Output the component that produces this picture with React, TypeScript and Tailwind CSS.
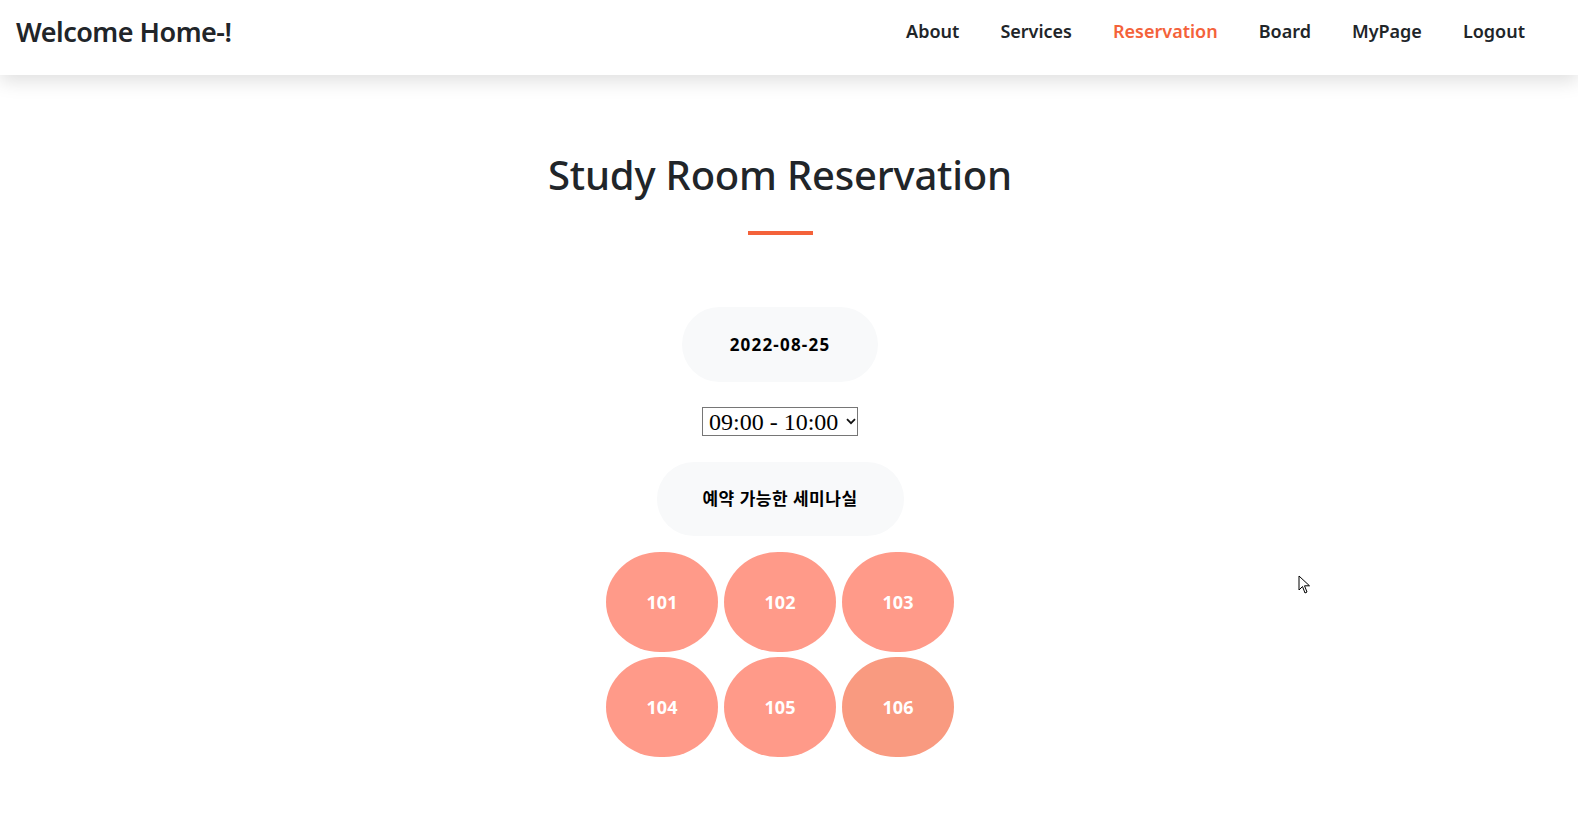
export default function App() {
  const rooms = ["101", "102", "103", "104", "105", "106"];
  const nav = ["About", "Services", "Reservation", "Board", "MyPage", "Logout"];

  return (
    <div className="relative min-h-screen bg-white text-[#212529]" style={{ fontFamily: '"Noto Sans", "Noto Sans CJK KR", sans-serif' }}>
      <header className="relative z-10 flex h-[75px] items-start justify-between bg-white pl-4 pr-[53px] shadow-[0_6px_18px_rgba(0,0,0,0.13)]">
        <h1 className="pt-[12px] text-[27px] font-semibold tracking-[-0.5px] text-[#212529]">Welcome Home-!</h1>
        <nav className="flex gap-[41px] pt-[18px] text-[18px] font-semibold">
          {nav.map((n) => (
            <a key={n} className={n === "Reservation" ? "text-[#f4623a]" : "text-[#212529]"}>
              {n}
            </a>
          ))}
        </nav>
      </header>

      <main className="flex flex-col items-center pr-[18px] pt-[75px]">
        <h2 className="text-[40px] font-medium leading-tight tracking-[-0.2px]">Study Room Reservation</h2>
        <div className="mt-[31px] h-[4px] w-[65px] bg-[#f4623a]" />

        <div className="mt-[72px] flex h-[75px] w-[196px] items-center justify-center rounded-full bg-[#f8f9fa] text-[17px] font-bold tracking-[1.2px] text-black">
          2022-08-25
        </div>

        <div className="relative mt-[25px]">
          <select
            className="block h-[29px] w-[156px] appearance-none border border-[#767676] bg-white pl-[6px] text-[24px] leading-none text-black"
            style={{ fontFamily: '"Liberation Serif", serif' }}
            defaultValue="09:00 - 10:00"
          >
            <option>09:00 - 10:00</option>
          </select>
          <svg className="pointer-events-none absolute right-[2px] top-[11px]" width="10" height="7" viewBox="0 0 10 7">
            <path d="M1 1.2 L5 5.2 L9 1.2" fill="none" stroke="#111" strokeWidth="1.8" />
          </svg>
        </div>

        <div className="mt-[26px] flex h-[74px] w-[247px] items-center justify-center rounded-full bg-[#f8f9fa] text-[17px] font-bold tracking-[0.5px] text-black">
          예약 가능한 세미나실
        </div>

        <div className="mt-[16px] grid grid-cols-3 gap-x-[6px] gap-y-[5px]">
          {rooms.map((r) => (
            <button
              key={r}
              className={`flex h-[100px] w-[112px] items-center justify-center rounded-[54px/50px] text-[18px] font-bold text-white ${
                r === "106" ? "bg-[#f99a80]" : "bg-[#ff9a89]"
              }`}
            >
              {r}
            </button>
          ))}
        </div>
      </main>

      <svg className="absolute left-[1298px] top-[575px]" width="14" height="20" viewBox="0 0 14 20">
        <path d="M1 1 L1 15 L4.5 11.5 L7 18 L9 17 L6.5 10.8 L11.5 10.8 Z" fill="white" stroke="black" strokeWidth="1" strokeLinejoin="round" />
      </svg>
    </div>
  );
}
